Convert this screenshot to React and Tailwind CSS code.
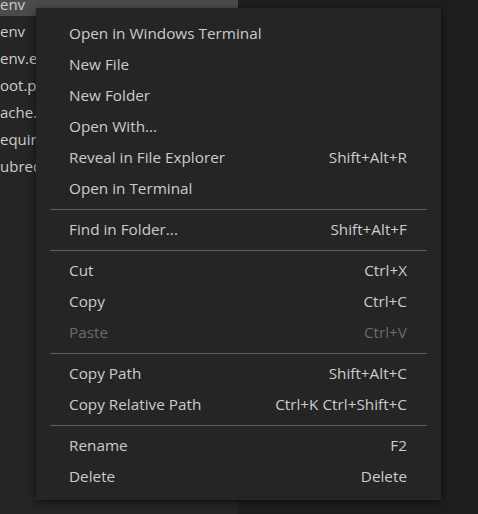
const files = ['env', 'env', 'env.example', 'oot.py', 'ache.db', 'equirements.txt', 'ubreddits.json'];

const groups = [
  [
    { label: 'Open in Windows Terminal' },
    { label: 'New File' },
    { label: 'New Folder' },
    { label: 'Open With...' },
    { label: 'Reveal in File Explorer', keys: 'Shift+Alt+R' },
    { label: 'Open in Terminal' },
  ],
  [{ label: 'Find in Folder...', keys: 'Shift+Alt+F' }],
  [
    { label: 'Cut', keys: 'Ctrl+X' },
    { label: 'Copy', keys: 'Ctrl+C' },
    { label: 'Paste', keys: 'Ctrl+V', disabled: true },
  ],
  [
    { label: 'Copy Path', keys: 'Shift+Alt+C' },
    { label: 'Copy Relative Path', keys: 'Ctrl+K Ctrl+Shift+C' },
  ],
  [
    { label: 'Rename', keys: 'F2' },
    { label: 'Delete', keys: 'Delete' },
  ],
];

function MenuItem({ label, keys, disabled }) {
  return (
    <div
      className={
        'flex h-[31px] items-center justify-between pl-[33px] pr-[34px] ' +
        (disabled ? 'text-[#6b6b6b]' : 'text-[#cccccc]')
      }
    >
      <span>{label}</span>
      {keys && <span>{keys}</span>}
    </div>
  );
}

export default function App() {
  return (
    <div
      className="relative flex h-[514px] w-[478px] overflow-hidden bg-[#1e1e1e]"
      style={{ fontFamily: '"Open Sans", "Noto Sans", sans-serif' }}
    >
      {/* explorer */}
      <div className="w-[238px] bg-[#252526] text-[15px]">
        <div className="-mt-[11px] flex flex-col">
          {files.map((name, i) => (
            <div
              key={i}
              className={
                'flex h-[27px] items-end pb-[4px] leading-none text-[#cccccc] ' +
                (i === 0 ? 'bg-[#4b4b4b]' : '')
              }
            >
              <span className="whitespace-nowrap">{name}</span>
            </div>
          ))}
        </div>
      </div>
      <div className="flex-1" />

      {/* context menu */}
      <div className="absolute left-[36px] top-[8px] w-[405px] bg-[#252526] pt-[10px] pb-[8px] text-[15.3px] shadow-[0_2px_8px_rgba(0,0,0,0.6)]">
        {groups.map((group, gi) => (
          <div key={gi}>
            {gi > 0 && (
              <div className="flex h-[10px] items-center px-[14px]">
                <div className="h-px w-full bg-[#606060]" />
              </div>
            )}
            {group.map((item) => (
              <MenuItem key={item.label} {...item} />
            ))}
          </div>
        ))}
      </div>
    </div>
  );
}
